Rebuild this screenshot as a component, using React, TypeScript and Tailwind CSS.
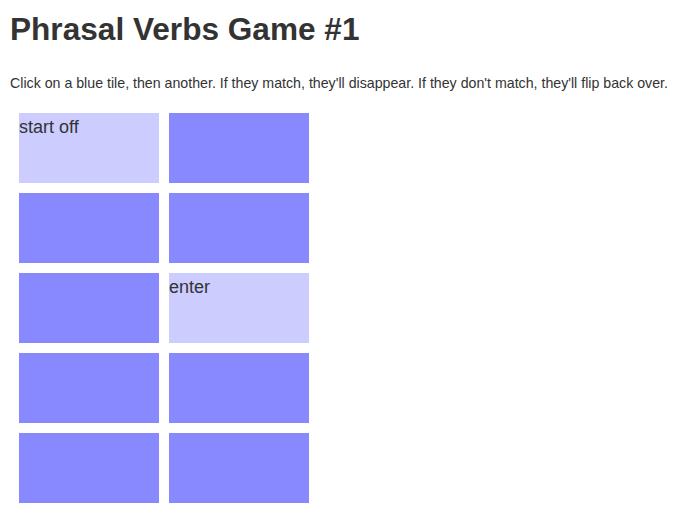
const tiles: (string | null)[] = ["start off", null, null, null, null, "enter", null, null, null, null];

export default function App() {
  return (
    <div className="min-h-[527px] bg-white px-[10px] text-[#333333]" style={{ fontFamily: '"Liberation Sans", Arial, sans-serif' }}>
      <h1 className="pt-[11px] text-[31.6px] font-bold leading-[36px]">Phrasal Verbs Game #1</h1>
      <p className="mt-[26px] text-[14.2px] leading-[20px]">
        Click on a blue tile, then another. If they match, they'll disappear. If they don't match, they'll flip back over.
      </p>
      <div className="ml-[9px] mt-[20px] grid w-[290px] grid-cols-2 gap-[10px]">
        {tiles.map((t, i) => (
          <div key={i} className={t ? "h-[70px] w-[140px] bg-[#ccccff] text-[18px] leading-[28px]" : "h-[70px] w-[140px] bg-[#8888ff]"}>
            {t}
          </div>
        ))}
      </div>
    </div>
  );
}
